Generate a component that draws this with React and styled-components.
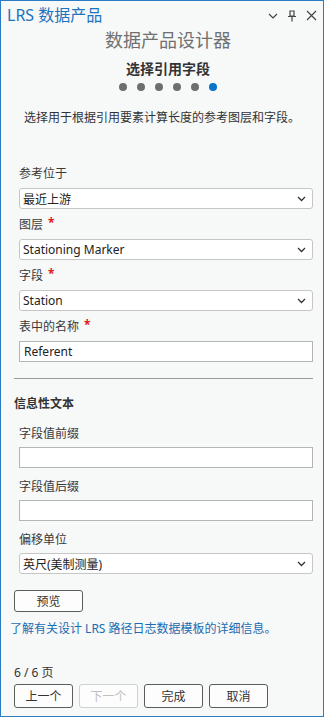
import styled, { createGlobalStyle } from 'styled-components';

const GlobalStyle = createGlobalStyle`
  html, body {
    margin: 0;
    padding: 0;
    background: #f7f8f8;
  }
  body {
    font-family: "Noto Sans", "Noto Sans CJK SC", sans-serif;
  }
`;

function Chevron() {
  return (
    <svg width="9" height="6" viewBox="0 0 9 6">
      <path d="M1 1 L4.5 4.5 L8 1" fill="none" stroke="#333" strokeWidth="1.3" />
    </svg>
  );
}

function Select({ value }) {
  return (
    <StyledSelect>
      <span>{value}</span>
      <Chevron />
    </StyledSelect>
  );
}

function Field({ label, required, children, $lower }) {
  return (
    <StyledField $lower={$lower}>
      <Label $lower={$lower}>
        {label}
        {required && <Star>*</Star>}
      </Label>
      {children}
    </StyledField>
  );
}

function App() {
  return (
    <>
      <GlobalStyle />
      <Window>
        <TitleBar>
          <Title>LRS 数据产品</Title>
          <TitleIcons>
            <svg width="10" height="6" viewBox="0 0 10 6">
              <path d="M1 1 L5 5 L9 1" fill="none" stroke="#444" strokeWidth="1.2" />
            </svg>
            <svg width="10" height="12" viewBox="0 0 10 12">
              <path d="M3 1 H7 V6 H3 Z M1 6.5 H9 M5 6.5 V11.5" fill="none" stroke="#444" strokeWidth="1.2" />
            </svg>
            <svg width="11" height="11" viewBox="0 0 11 11">
              <path d="M1 1 L10 10 M10 1 L1 10" fill="none" stroke="#444" strokeWidth="1.2" />
            </svg>
          </TitleIcons>
        </TitleBar>

        <Heading>数据产品设计器</Heading>
        <StepTitle>选择引用字段</StepTitle>
        <Dots>
          {[0, 1, 2, 3, 4, 5].map((i) => (
            <Dot key={i} $active={i === 5} />
          ))}
        </Dots>
        <Description>选择用于根据引用要素计算长度的参考图层和字段。</Description>

        <Content>
          <Fields>
            <Field label="参考位于">
              <Select value="最近上游" />
            </Field>
            <Field label="图层" required>
              <Select value="Stationing Marker" />
            </Field>
            <Field label="字段" required>
              <Select value="Station" />
            </Field>
            <Field label="表中的名称" required>
              <Input>Referent</Input>
            </Field>
          </Fields>

          <Divider />
          <SectionTitle>信息性文本</SectionTitle>

          <Fields $lower>
            <Field label="字段值前缀" $lower>
              <Input />
            </Field>
            <Field label="字段值后缀" $lower>
              <Input />
            </Field>
            <Field label="偏移单位" $lower>
              <Select value="英尺(美制测量)" />
            </Field>
          </Fields>

          <PreviewButton>预览</PreviewButton>
          <Link>了解有关设计 LRS 路径日志数据模板的详细信息。</Link>

          <Footer>
            <PageInfo>6 / 6 页</PageInfo>
            <ButtonRow>
              <Button>上一个</Button>
              <Button disabled>下一个</Button>
              <Button>完成</Button>
              <Button>取消</Button>
            </ButtonRow>
          </Footer>
        </Content>
      </Window>
    </>
  );
}

const Window = styled.div`
  width: 324px;
  height: 717px;
  box-sizing: border-box;
  border: 1px solid #2a7dc4;
  background: #f7f8f8;
  display: flex;
  flex-direction: column;
  color: #333;
`;

const TitleBar = styled.div`
  height: 27px;
  display: flex;
  align-items: center;
  justify-content: space-between;
  padding: 0 6px 0 6px;
`;

const Title = styled.div`
  font-size: 16px;
  line-height: 1;
  color: #1b74be;
`;

const TitleIcons = styled.div`
  display: flex;
  align-items: center;
  gap: 9px;
  padding-top: 2px;
`;

const Heading = styled.div`
  height: 24px;
  line-height: 24px;
  font-size: 18px;
  color: #707070;
  text-align: center;
  padding-left: 12px;
  margin-top: 0;
`;

const StepTitle = styled.div`
  margin-top: 6px;
  height: 21px;
  line-height: 21px;
  font-size: 14px;
  font-weight: 700;
  color: #333;
  text-align: center;
  padding-left: 12px;
`;

const Dots = styled.div`
  margin-top: 4px;
  display: flex;
  justify-content: center;
  gap: 10px;
  padding-left: 12px;
`;

const Dot = styled.span`
  width: 8px;
  height: 8px;
  border-radius: 50%;
  background: ${(p) => (p.$active ? '#0a74c8' : '#6e6e6e')};
`;

const Description = styled.div`
  margin-top: 18px;
  line-height: 18px;
  font-size: 12px;
  color: #333;
  text-align: center;
`;

const Content = styled.div`
  flex: 1;
  display: flex;
  flex-direction: column;
  padding: 0 10px 8px 13px;
  margin-top: 31px;
`;

const Fields = styled.div`
  display: flex;
  flex-direction: column;
  padding-left: 5px;
  margin-top: ${(p) => (p.$lower ? '5px' : '0')};
`;

const StyledField = styled.div`
  display: flex;
  flex-direction: column;
  margin-top: ${(p) => (p.$lower ? '4px' : '0')};
  &:first-child {
    margin-top: 0;
  }
`;

const Label = styled.div`
  height: ${(p) => (p.$lower ? '28px' : '30px')};
  display: flex;
  align-items: center;
  font-size: 12px;
  color: #3a3a3a;
`;

const Star = styled.span`
  color: #e0201b;
  font-weight: 700;
  margin-left: 5px;
  position: relative;
  top: -2px;
`;

const StyledSelect = styled.div`
  height: 21px;
  box-sizing: border-box;
  border: 1px solid #c6c6c6;
  border-radius: 3px;
  background: #fff;
  display: flex;
  align-items: center;
  justify-content: space-between;
  padding: 0 6px 0 3px;
  font-size: 12px;
  color: #222;
`;

const Input = styled.div`
  height: 21px;
  box-sizing: border-box;
  border: 1px solid #b5b5b5;
  background: #fff;
  display: flex;
  align-items: center;
  padding: 0 4px;
  font-size: 12px;
  color: #222;
`;

const Divider = styled.div`
  margin-top: 16px;
  height: 1px;
  background: #9a9a9a;
`;

const SectionTitle = styled.div`
  margin-top: 15px;
  line-height: 20px;
  font-size: 12px;
  font-weight: 600;
  color: #333;
`;

const PreviewButton = styled.button`
  margin-top: 16px;
  width: 69px;
  height: 22px;
  box-sizing: border-box;
  border: 1px solid #5c5c5c;
  border-radius: 3px;
  background: #fdfdfd;
  font-family: inherit;
  font-size: 12px;
  color: #333;
  padding: 0;
`;

const Link = styled.div`
  margin-top: 9px;
  margin-left: -4px;
  line-height: 16px;
  font-size: 12px;
  color: #1a6db3;
`;

const Footer = styled.div`
  margin-top: auto;
  display: flex;
  flex-direction: column;
  gap: 3px;
`;

const PageInfo = styled.div`
  line-height: 16px;
  font-size: 12px;
  color: #333;
`;

const ButtonRow = styled.div`
  display: flex;
  gap: 6px;
`;

const Button = styled.button`
  width: 59px;
  height: 24px;
  box-sizing: border-box;
  border: 1px solid ${(p) => (p.disabled ? '#d0d0d0' : '#5c5c5c')};
  border-radius: 3px;
  background: #fdfdfd;
  font-family: inherit;
  font-size: 12px;
  color: ${(p) => (p.disabled ? '#c0c0c0' : '#333')};
  padding: 0;
`;

export default App;
